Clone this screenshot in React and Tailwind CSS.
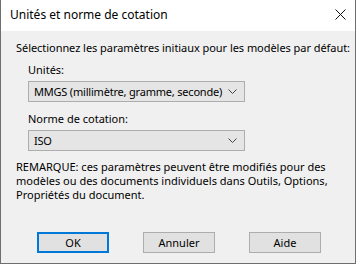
import React from 'react';

function Combo({ value }) {
  return (
    <div className="flex h-[21px] w-[217px] items-center justify-between border border-[#adadad] bg-[#e5e5e5] pl-[5px] pr-[6px] text-black">
      <span className="whitespace-nowrap tracking-[-0.2px]">{value}</span>
      <svg width="9" height="5" viewBox="0 0 9 5" className="mr-[1px]">
        <path d="M0.5 0.5 L4.5 4.5 L8.5 0.5" fill="none" stroke="#444" strokeWidth="1" />
      </svg>
    </div>
  );
}

function Btn({ children, primary }) {
  return (
    <button
      className={
        primary
          ? 'h-[21px] w-[72px] border-2 border-[#0078d7] bg-[#e1e1e1] text-black'
          : 'h-[21px] w-[72px] border border-[#adadad] bg-[#e1e1e1] text-black'
      }
    >
      {children}
    </button>
  );
}

export default function App() {
  return (
    <div
      className="flex h-[264px] w-[356px] flex-col border-x border-b border-[#6f6f6f] bg-[#f0f0f0] text-[11px] leading-[14px] text-black"
      style={{ fontFamily: '"Segoe UI", "Noto Sans", sans-serif' }}
    >
      <div className="flex h-[31px] items-center justify-between bg-white pb-[2px] pl-[9px] pr-[9px]">
        <span className="text-[12px]">Unités et norme de cotation</span>
        <svg width="11" height="11" viewBox="0 0 11 11">
          <path d="M0.5 0.5 L10.5 10.5 M10.5 0.5 L0.5 10.5" stroke="#111" strokeWidth="1" />
        </svg>
      </div>

      <div className="flex flex-col pl-[15px] pt-[10px]">
        <p className="whitespace-nowrap tracking-[-0.05px]">Sélectionnez les paramètres initiaux pour les modèles par défaut:</p>

        <div className="ml-[12px] mt-[8px] flex flex-col gap-[4px]">
          <label>Unités:</label>
          <Combo value="MMGS (millimètre, gramme, seconde)" />
        </div>

        <div className="ml-[12px] mt-[10px] flex flex-col gap-[4px]">
          <label>Norme de cotation:</label>
          <Combo value="ISO" />
        </div>

        <p className="mt-[9px] whitespace-nowrap leading-[14px]">
          REMARQUE: ces paramètres peuvent être modifiés pour des
          <br />
          modèles ou des documents individuels dans Outils, Options,
          <br />
          Propriétés du document.
        </p>
      </div>

      <div className="mt-auto mb-[10px] flex gap-[34px] pl-[36px]">
        <Btn primary>OK</Btn>
        <Btn>Annuler</Btn>
        <Btn>Aide</Btn>
      </div>
    </div>
  );
}
